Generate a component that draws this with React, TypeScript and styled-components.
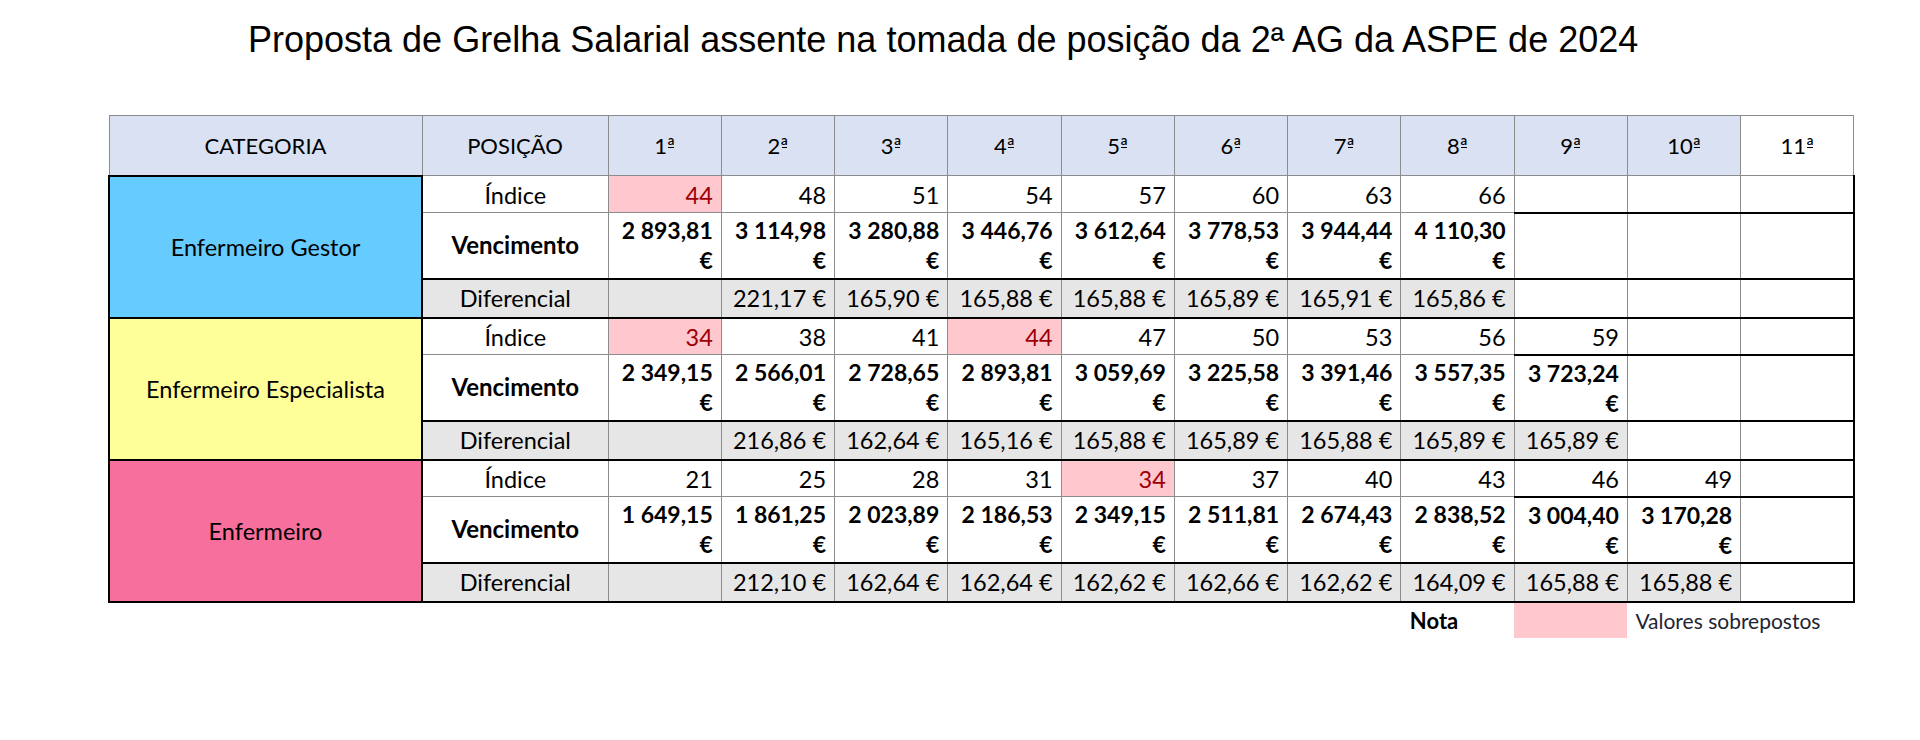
import React from "react";
import styled, { createGlobalStyle } from "styled-components";

type Kind = "index" | "venc" | "dif";

interface Group {
  name: string;
  color: string;
  index: string[];
  highlight: number[];
  venc: string[];
  dif: string[];
}

const groups: Group[] = [
  {
    name: "Enfermeiro Gestor",
    color: "#66ccff",
    index: ["44", "48", "51", "54", "57", "60", "63", "66"],
    highlight: [0],
    venc: ["2 893,81", "3 114,98", "3 280,88", "3 446,76", "3 612,64", "3 778,53", "3 944,44", "4 110,30"],
    dif: ["", "221,17", "165,90", "165,88", "165,88", "165,89", "165,91", "165,86"],
  },
  {
    name: "Enfermeiro Especialista",
    color: "#ffff99",
    index: ["34", "38", "41", "44", "47", "50", "53", "56", "59"],
    highlight: [0, 3],
    venc: ["2 349,15", "2 566,01", "2 728,65", "2 893,81", "3 059,69", "3 225,58", "3 391,46", "3 557,35", "3 723,24"],
    dif: ["", "216,86", "162,64", "165,16", "165,88", "165,89", "165,88", "165,89", "165,89"],
  },
  {
    name: "Enfermeiro",
    color: "#f76f9c",
    index: ["21", "25", "28", "31", "34", "37", "40", "43", "46", "49"],
    highlight: [4],
    venc: ["1 649,15", "1 861,25", "2 023,89", "2 186,53", "2 349,15", "2 511,81", "2 674,43", "2 838,52", "3 004,40", "3 170,28"],
    dif: ["", "212,10", "162,64", "162,64", "162,62", "162,66", "162,62", "164,09", "165,88", "165,88"],
  },
];

const positions = ["1", "2", "3", "4", "5", "6", "7", "8", "9", "10", "11"];

const THIN = "1px solid #8c8c8c";
const THICK = "2px solid #000";

const GlobalStyle = createGlobalStyle`
  html, body {
    margin: 0;
    padding: 0;
    background: #fff;
  }
  body {
    font-family: Lato, "Open Sans", sans-serif;
    color: #000;
  }
`;

const Page = styled.div`
  width: 1920px;
  height: 740px;
  background: #fff;
  overflow: hidden;
`;

const Title = styled.h1`
  margin: 0;
  padding: 18px 0 0 248px;
  font-family: "Liberation Sans", Arial, sans-serif;
  font-weight: 400;
  font-size: 36px;
  line-height: 44px;
  color: #000;
`;

const Grid = styled.table`
  margin: 53px 0 0 108px;
  border-collapse: collapse;
  table-layout: fixed;
  width: 1745px;
  font-size: 23.5px;
`;

const Col = styled.col<{ $w: number }>`
  width: ${(p) => p.$w}px;
`;

const HeadRow = styled.tr`
  height: 60px;
`;

const BodyRow = styled.tr<{ $kind: Kind }>`
  height: ${(p) => (p.$kind === "index" ? 37 : p.$kind === "venc" ? 66 : 39)}px;
`;

const LegendRow = styled.tr`
  height: 36px;
`;

const HeadCell = styled.th<{ $fill: boolean }>`
  padding: 0;
  background: ${(p) => (p.$fill ? "#d9e1f2" : "#fff")};
  border: ${THIN};
  font-size: 22px;
  font-weight: 400;
  text-align: center;
  vertical-align: middle;
`;

/* Calibri-style ordinal: raised "a" with a bar under it */
const Ord = styled.span`
  position: relative;
  &::after {
    content: "";
    position: absolute;
    left: 0.06em;
    right: 0.06em;
    bottom: 0.5em;
    height: 1.5px;
    background: currentColor;
  }
`;

const CatCell = styled.td<{ $bg: string }>`
  padding: 0;
  background: ${(p) => p.$bg};
  border: ${THICK};
  text-align: center;
  vertical-align: middle;
`;

const LabelCell = styled.td<{ $kind: Kind }>`
  padding: 0 0 ${(p) => (p.$kind === "venc" ? 0 : p.$kind === "dif" ? 6 : 4)}px;
  text-align: center;
  line-height: 26px;
  vertical-align: ${(p) => (p.$kind === "venc" ? "middle" : "bottom")};
  font-size: ${(p) => (p.$kind === "venc" ? 24 : 23.5)}px;
  font-weight: ${(p) => (p.$kind === "venc" ? 700 : 400)};
  background: ${(p) => (p.$kind === "dif" ? "#e7e6e6" : "#fff")};
  border-left: ${THICK};
  border-right: ${THIN};
  border-bottom: ${(p) => (p.$kind === "index" ? THIN : THICK)};
`;

const ValueCell = styled.td<{
  $kind: Kind;
  $hl?: boolean;
  $shade?: boolean;
  $late?: boolean;
  $edge?: boolean;
}>`
  padding: ${(p) =>
    p.$kind === "venc" ? "2px 8px 0 0" : p.$kind === "dif" ? "0 8px 6px 0" : "0 8px 4px 0"};
  text-align: right;
  white-space: nowrap;
  font-size: ${(p) => (p.$kind === "venc" ? 23 : 23.5)}px;
  line-height: ${(p) => (p.$kind === "venc" ? 30 : 26)}px;
  vertical-align: ${(p) => (p.$kind === "venc" ? "top" : "bottom")};
  font-weight: ${(p) => (p.$kind === "venc" ? 700 : 400)};
  color: ${(p) => (p.$hl ? "#9c0006" : "#000")};
  background: ${(p) => (p.$hl ? "#ffc7ce" : p.$shade ? "#e7e6e6" : "#fff")};
  border-left: ${THIN};
  border-right: ${(p) => (p.$edge ? THICK : THIN)};
  border-bottom: ${(p) => (p.$kind === "index" && !p.$late ? THIN : THICK)};
`;

const Line = styled.span`
  display: block;
`;

const Blank = styled.td`
  padding: 0;
  border: none;
`;

const NoteLabel = styled.td`
  padding: 0 0 4px 9px;
  border: none;
  font-size: 22px;
  font-weight: 700;
  line-height: 26px;
  vertical-align: bottom;
`;

const Swatch = styled.td`
  padding: 0;
  border: none;
  background: #ffc7ce;
`;

const NoteText = styled.td`
  padding: 0 0 4px 8px;
  border: none;
  font-size: 21px;
  line-height: 26px;
  color: #1f2533;
  vertical-align: bottom;
  white-space: nowrap;
`;

const rowLabels: Record<Kind, string> = {
  index: "Índice",
  venc: "Vencimento",
  dif: "Diferencial",
};

function GroupRows({ group }: { group: Group }) {
  const kinds: Kind[] = ["index", "venc", "dif"];
  return (
    <>
      {kinds.map((kind, r) => (
        <BodyRow $kind={kind} key={kind}>
          {r === 0 && (
            <CatCell rowSpan={3} $bg={group.color}>
              {group.name}
            </CatCell>
          )}
          <LabelCell $kind={kind}>{rowLabels[kind]}</LabelCell>
          {positions.map((_, i) => {
            const filled = i < group.index.length;
            let content: React.ReactNode = null;
            if (filled && kind === "index") content = group.index[i];
            if (filled && kind === "venc")
              content = (
                <>
                  <Line>{group.venc[i].replace(" ", "\u00a0")}</Line>
                  <Line>€</Line>
                </>
              );
            if (filled && kind === "dif" && group.dif[i])
              content = `${group.dif[i]}\u00a0€`;
            return (
              <ValueCell
                key={i}
                $kind={kind}
                $hl={kind === "index" && group.highlight.includes(i)}
                $shade={kind === "dif" && filled}
                $late={i >= 8}
                $edge={i === positions.length - 1}
              >
                {content}
              </ValueCell>
            );
          })}
        </BodyRow>
      ))}
    </>
  );
}

export default function App() {
  return (
    <Page>
      <GlobalStyle />
      <Title>Proposta de Grelha Salarial assente na tomada de posição da 2ª AG da ASPE de 2024</Title>
      <Grid>
        <colgroup>
          <Col $w={313} />
          <Col $w={186} />
          {positions.map((p) => (
            <Col key={p} $w={113.27} />
          ))}
        </colgroup>
        <thead>
          <HeadRow>
            <HeadCell $fill>CATEGORIA</HeadCell>
            <HeadCell $fill>POSIÇÃO</HeadCell>
            {positions.map((p, i) => (
              <HeadCell key={p} $fill={i < 10}>
                {p}
                <Ord>ª</Ord>
              </HeadCell>
            ))}
          </HeadRow>
        </thead>
        <tbody>
          {groups.map((g) => (
            <GroupRows group={g} key={g.name} />
          ))}
        </tbody>
        <tfoot>
          <LegendRow>
            <Blank colSpan={9} />
            <NoteLabel>Nota</NoteLabel>
            <Swatch />
            <NoteText colSpan={2}>Valores sobrepostos</NoteText>
          </LegendRow>
        </tfoot>
      </Grid>
    </Page>
  );
}
